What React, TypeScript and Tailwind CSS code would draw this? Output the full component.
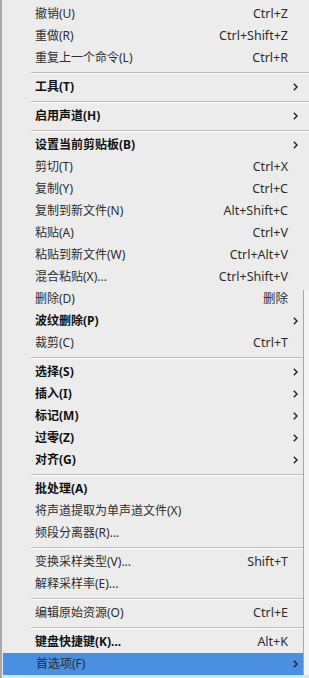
import React from "react";

type Item =
  | { sep: true }
  | { label: string; sc?: string; bold?: boolean; arrow?: boolean; hl?: boolean };

const items: Item[] = [
  { label: "撤销(U)", sc: "Ctrl+Z" },
  { label: "重做(R)", sc: "Ctrl+Shift+Z" },
  { label: "重复上一个命令(L)", sc: "Ctrl+R" },
  { sep: true },
  { label: "工具(T)", bold: true, arrow: true },
  { sep: true },
  { label: "启用声道(H)", bold: true, arrow: true },
  { sep: true },
  { label: "设置当前剪贴板(B)", bold: true, arrow: true },
  { label: "剪切(T)", sc: "Ctrl+X" },
  { label: "复制(Y)", sc: "Ctrl+C" },
  { label: "复制到新文件(N)", sc: "Alt+Shift+C" },
  { label: "粘贴(A)", sc: "Ctrl+V" },
  { label: "粘贴到新文件(W)", sc: "Ctrl+Alt+V" },
  { label: "混合粘贴(X)...", sc: "Ctrl+Shift+V" },
  { label: "删除(D)", sc: "删除" },
  { label: "波纹删除(P)", bold: true, arrow: true },
  { label: "裁剪(C)", sc: "Ctrl+T" },
  { sep: true },
  { label: "选择(S)", bold: true, arrow: true },
  { label: "插入(I)", bold: true, arrow: true },
  { label: "标记(M)", bold: true, arrow: true },
  { label: "过零(Z)", bold: true, arrow: true },
  { label: "对齐(G)", bold: true, arrow: true },
  { sep: true },
  { label: "批处理(A)", bold: true },
  { label: "将声道提取为单声道文件(X)" },
  { label: "频段分离器(R)..." },
  { sep: true },
  { label: "变换采样类型(V)...", sc: "Shift+T" },
  { label: "解释采样率(E)..." },
  { sep: true },
  { label: "编辑原始资源(O)", sc: "Ctrl+E" },
  { sep: true },
  { label: "键盘快捷键(K)...", sc: "Alt+K", bold: true },
  { label: "首选项(F)", arrow: true, hl: true },
];

function Chevron() {
  return (
    <svg width="5" height="8" viewBox="0 0 5 8" className="block">
      <path d="M0.8 0.8 L4 4 L0.8 7.2" fill="none" stroke="#222" strokeWidth="1.4" />
    </svg>
  );
}

export default function App() {
  return (
    <div
      className="relative w-[309px] h-[678px] bg-[#ececec] overflow-hidden text-[12px] border-l-2 border-[#a9a9a9]"
      style={{ fontFamily: '"Noto Sans", "Noto Sans CJK SC", sans-serif' }}
    >
      <div className="flex flex-col pt-[3px]">
        {items.map((it, i) =>
          "sep" in it ? (
            <div key={i} className="h-[7px] pl-[29px] flex flex-col justify-center">
              <div className="h-px bg-[#bcbcbc]" />
              <div className="h-px bg-[#fafafa]" />
            </div>
          ) : (
            <div
              key={i}
              className={
                "h-[22px] flex items-center pl-[33px] " +
                (it.hl ? "bg-[#4a8fe0] mr-[6px] ml-px pl-[32px]" : "")
              }
            >
              <span
                className={
                  "flex-1 whitespace-nowrap leading-none " +
                  (it.bold ? "font-bold text-[#111]" : "text-[#2c2c2c]")
                }
              >
                {it.label}
              </span>
              <span className="whitespace-nowrap leading-none text-[12.5px] text-[#2c2c2c]">{it.sc ?? ""}</span>
              <span className={"flex items-center justify-start pl-[5px] " + (it.hl ? "w-[15px]" : "w-[21px]")}>
                {it.arrow ? <Chevron /> : null}
              </span>
            </div>
          )
        )}
      </div>
      <div className="absolute left-[301px] top-[290px] bottom-0 w-px bg-[#a8a8a8]" />
      <div className="absolute left-[302px] top-[290px] bottom-0 right-0 bg-[#f4f4f4]" />
      <div className="absolute left-0 right-0 bottom-0 h-[3px] bg-[#cfe9ee]" />
    </div>
  );
}
